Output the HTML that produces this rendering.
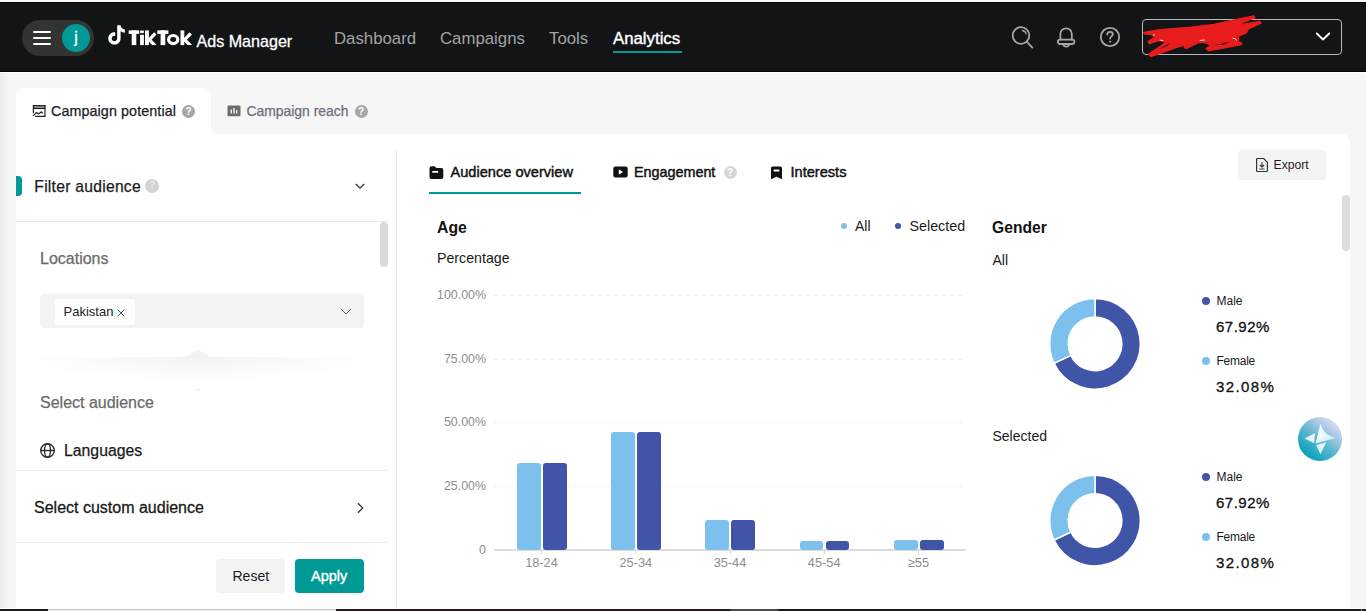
<!DOCTYPE html>
<html>
<head>
<meta charset="utf-8">
<title>TikTok Ads Manager</title>
<style>
*{box-sizing:border-box;margin:0;padding:0}
html,body{width:1366px;height:611px;overflow:hidden}
body{font-family:"Liberation Sans",sans-serif;background:#f6f6f6;position:relative;color:#121415}
.abs{position:absolute}
.t{position:absolute;white-space:nowrap;line-height:1}
/* header */
#topline{left:0;top:0;width:1366px;height:2px;background:#f8f8fd}
#hdr{left:0;top:2px;width:1366px;height:70px;background:#121415}
#hdrshadow{left:0;top:71px;width:1366px;height:1px;background:#020303}
#hdrwhite{left:0;top:72px;width:1366px;height:1px;background:#ffffff}
#leftshade{left:0;top:73px;width:9px;height:535px;background:linear-gradient(90deg,#ebebeb,#f6f6f6)}
#pill{left:22px;top:20px;width:72px;height:36px;border-radius:18px;background:#323434}
.hb{left:33px;width:18px;height:2px;background:#fff;border-radius:1px}
#avatar{left:62px;top:24px;width:28px;height:28px;border-radius:14px;background:#009995}
.nav{font-size:16.8px;color:#a3a4a6;top:31px}
/* panels */
#tab1{left:16px;top:88px;width:195px;height:50px;background:#fff;border-radius:8px 8px 0 0}
#panel{left:16px;top:134px;width:1334px;height:475px;background:#fff;border-radius:0 8px 0 0}
#notch{left:211px;top:126px;width:8px;height:8px;background:radial-gradient(circle at 100% 0,#f6f6f6 7.5px,#fff 8.5px)}
.hline{height:1px;background:#e9e9e9}
.help{border-radius:50%;color:#fff;text-align:center;font-weight:bold}
.btn{border-radius:4px;background:#f2f3f3}
.glabel{font-size:12.400px;color:#8d8d8d}
.bar{position:absolute;border-radius:3px}
.lb{background:#7cc0ee}.db{background:#4155a8}
.grid{position:absolute;left:494px;width:471px;height:1px;background:repeating-linear-gradient(90deg,#eeeeee 0,#eeeeee 4.200px,transparent 4.200px,transparent 8px)}
.itab{font-size:14.600px;color:#121212;-webkit-text-stroke:0.45px #121212}
.gv{font-size:15px;color:#111;-webkit-text-stroke:0.3px #111;letter-spacing:0.5px}
</style>
</head>
<body>
<!-- HEADER -->
<div class="abs" id="topline"></div>
<div class="abs" id="hdr"></div>
<div class="abs" id="hdrshadow"></div>
<div class="abs" style="left:0;top:2px;width:1366px;height:1px;background:#040405"></div>
<div class="abs" id="hdrwhite"></div>
<div class="abs" id="leftshade"></div>
<div class="abs" id="pill"></div>
<div class="abs hb" style="top:31px"></div>
<div class="abs hb" style="top:37px"></div>
<div class="abs hb" style="top:43px"></div>
<div class="abs" id="avatar"></div>
<div class="t" id="jj" style="left:74.200px;top:30px;font-size:16px;color:#fff;-webkit-text-stroke:0.3px #fff">j</div>
<!-- logo -->
<svg class="abs" style="left:107px;top:24px" width="20" height="22" viewBox="0 0 20 22"><path d="M10.2 1.2h3.4c.1 2.3 1.700 3.900 4.300 4.200v3.300c-1.600 0-3.100-.5-4.300-1.400v7.100c0 3.600-2.800 6.100-6.100 6.100-3.400 0-6.200-2.700-6.200-6.100 0-3.600 3.100-6.500 6.900-6v3.400c-1.900-.5-3.500.9-3.500 2.600 0 1.500 1.200 2.800 2.800 2.800 1.600 0 2.700-1.200 2.700-2.900z" fill="#fff"/></svg>
<svg class="abs" id="tiktok" style="left:0;top:0" width="200" height="60" viewBox="0 0 200 60"><defs><clipPath id="kc"><rect x="120" y="30.400" width="80" height="14.700"/></clipPath></defs><g fill="#fff" stroke="none"><rect x="128.700" y="30.400" width="10.500" height="3.500"/><rect x="131.700" y="30.400" width="4.600" height="14.700"/><rect x="140.100" y="30.500" width="3.800" height="2.800" rx=".8"/><rect x="140.100" y="34.800" width="3.800" height="10.300"/><rect x="145" y="30.400" width="3.900" height="14.700"/><rect x="157.300" y="30.400" width="11.100" height="3.500"/><rect x="160.600" y="30.400" width="4.700" height="14.700"/><rect x="180.500" y="30.400" width="3.800" height="14.700"/></g><g fill="none" stroke="#fff" stroke-width="3.300" clip-path="url(#kc)"><path d="M155.300 33.300L149.300 39.700L156.300 47"/><path d="M190.700 33.300L184.700 39.700L191.800 47"/></g><ellipse cx="173.200" cy="39.550" rx="4.600" ry="4.050" fill="none" stroke="#fff" stroke-width="3.200"/></svg>
<div class="t" id="adsm" style="left:196.500px;top:33px;font-size:16.100px;color:#fff;-webkit-text-stroke:0.3px #fff">Ads Manager</div>
<div class="t nav" id="n1" style="left:334px">Dashboard</div>
<div class="t nav" id="n2" style="left:440px">Campaigns</div>
<div class="t nav" id="n3" style="left:549px">Tools</div>
<div class="t nav" id="n4" style="left:613px;color:#fff;-webkit-text-stroke:0.4px #fff">Analytics</div>
<div class="abs" style="left:613px;top:51px;width:69px;height:2px;background:#009995"></div>
<!-- header icons -->
<svg class="abs" style="left:1008px;top:22px" width="30" height="30" viewBox="0 0 30 30" fill="none" stroke="#a6a7a8" stroke-width="1.800" stroke-linecap="round"><circle cx="13" cy="13.5" r="8.3"/><path d="M19 20l5.300 5.600"/><path d="M14.500 8.500c2 .3 3.200 1.600 3.600 3.400" stroke-width="1.300"/></svg>
<svg class="abs" style="left:1053px;top:24px" width="26" height="26" viewBox="0 0 26 26" fill="none" stroke="#a6a7a8" stroke-width="1.800" stroke-linejoin="round" stroke-linecap="round"><path d="M7.400 15.500V10a5.700 5.700 0 0 1 11.400 0V15.500"/><rect x="4.900" y="15.600" width="16.500" height="4.400" rx="2.200"/><path d="M10.500 21.300a2.800 1.700 0 0 0 5.400 0"/></svg>
<svg class="abs" style="left:1098px;top:25px" width="24" height="24" viewBox="0 0 24 24" fill="none" stroke="#a6a7a8" stroke-width="1.800" stroke-linecap="round"><circle cx="12" cy="12" r="9.200"/><path d="M9.300 9.600c0-1.700 1.200-2.700 2.800-2.700 1.500 0 2.700 1 2.700 2.400 0 2-2.700 2.100-2.700 4.200"/><circle cx="12.100" cy="16.700" r=".6" fill="#a6a7a8" stroke-width="1"/></svg>
<div class="abs" style="left:1142px;top:19px;width:200px;height:36px;border:1px solid #b9babb;border-radius:4px"></div>
<svg class="abs" style="left:1314px;top:30px" width="18" height="14" viewBox="0 0 18 14" fill="none" stroke="#fff" stroke-width="1.800" stroke-linecap="round" stroke-linejoin="round"><path d="M2.800 3.500l6.200 6 6.200-6"/></svg>
<svg class="abs" style="left:1136px;top:10px" width="136" height="54" viewBox="1136 10 136 54"><path d="M1143.7 32.4L1159.9 29.5L1191.3 27.1L1214.1 24.3L1233.2 20.0L1253.6 15.9L1255.1 17.6L1242.7 22.4L1237.0 25.2L1259.8 21.4L1261.2 23.3L1248.4 29.0L1246.5 32.8L1237.9 36.6L1238.9 40.0L1237.0 41.4L1241.7 42.8L1241.3 44.7L1208.4 50.9L1206.0 48.5L1210.3 45.7L1206.5 42.8L1198.9 42.4L1186.5 48.5L1184.2 47.6L1185.6 45.2L1178.9 46.6L1150.8 56.6L1148.5 54.3L1165.6 42.4L1159.9 40.5L1149.4 43.8L1148.0 41.4L1154.7 37.1L1153.2 34.9L1144.2 33.8z" fill="#e81c1c" stroke="#e81c1c" stroke-width="1.200" stroke-linejoin="round"/><path d="M1158.5 49.2L1169.9 43.3L1167.0 46.0zM1214.1 45.4L1229.8 41.7L1223.6 44.4z" fill="#121415"/><path d="M1153 35.500l1.500-.800M1160 40.200l3 .3M1200 40.500l4.500-.500M1233 38.200q3-.2 3.500 2" stroke="#f4e9e9" stroke-width="0.900" fill="none" stroke-linecap="round"/></svg>

<!-- TABS + PANEL -->
<div class="abs" id="tab1"></div>
<div class="abs" id="panel"></div>
<div class="abs" id="notch"></div>

<!-- outer tabs -->
<svg class="abs" style="left:32px;top:104px" width="14" height="14" viewBox="0 0 14 14" fill="none" stroke="#1e1e1e" stroke-width="1.200"><rect x="1.400" y="2.200" width="11.600" height="2" fill="#8f8f8f" stroke="none"/><path d="M3.200 12.300H13V1.700H1.400V9.200"/><path d="M1.400 4.500H13" stroke-width="1.100"/><path d="M1.100 11.900L4.500 8.500L6.600 10L9.400 7.800L10.800 9.400" stroke-width="1.200" stroke-linejoin="round"/></svg>
<div class="t" id="cp" style="left:51px;top:104px;letter-spacing:0.1px;font-size:14.3px;color:#1c1c28;-webkit-text-stroke:0.25px #1c1c28">Campaign potential</div>
<div class="abs help" style="left:182px;top:105px;width:13px;height:13px;background:#a6a6a6;font-size:10px;line-height:13px">?</div>
<svg class="abs" style="left:227px;top:105px" width="14" height="12" viewBox="0 0 14 12"><rect x=".5" y=".5" width="13" height="10.800" rx="1" fill="#6c6c6c"/><path d="M4.300 4.500v4M7 3v5.500M9.700 5.200v3.300" stroke="#fff" stroke-width="1.300"/></svg>
<div class="t" id="cr" style="left:246.500px;top:105px;font-size:13.9px;color:#6d6e7c;-webkit-text-stroke:0.25px #6d6e7c">Campaign reach</div>
<div class="abs help" style="left:354.500px;top:105px;width:13px;height:13px;background:#a6a6a6;font-size:10px;line-height:13px">?</div>

<!-- SIDEBAR -->
<div class="abs" style="left:16px;top:176px;width:6px;height:20px;background:#009995;border-radius:0 4px 4px 0"></div>
<div class="t" id="fa" style="left:34.300px;top:179px;font-size:15.700px;letter-spacing:0.250px;color:#1a1a1a;-webkit-text-stroke:0.25px #1a1a1a">Filter audience</div>
<div class="abs help" style="left:145px;top:179px;width:14px;height:14px;background:#d3d3d3;font-size:10px;line-height:14px;font-weight:normal;color:#f1f1f1">?</div>
<svg class="abs" style="left:354px;top:181px" width="12" height="10" viewBox="0 0 12 10" fill="none" stroke="#333" stroke-width="1.300"><path d="M1.800 3l4.200 4.200 4.200-4.200"/></svg>
<div class="abs hline" style="left:16px;top:221px;width:372px"></div>
<div class="abs" style="left:380px;top:222px;width:8px;height:45px;background:#dbdbdb;border-radius:4px"></div>
<div class="t" id="loc" style="left:40px;top:251px;font-size:16px;color:#6a6a6a;-webkit-text-stroke:0.25px #6a6a6a">Locations</div>
<div class="abs" style="left:40px;top:294px;width:324px;height:34px;background:#f2f3f3;border-radius:4px"></div>
<div class="abs" style="left:55px;top:299px;width:80px;height:26px;background:#fff;border-radius:4px"></div>
<div class="t" id="pak" style="left:63.500px;top:305px;font-size:13px;color:#222">Pakistan</div>
<svg class="abs" style="left:115.500px;top:307.500px" width="10" height="10" viewBox="0 0 10 10" stroke="#555" stroke-width="1" fill="none"><path d="M1.700 1.700l6.600 6.600M8.300 1.700l-6.600 6.600"/></svg>
<svg class="abs" style="left:339px;top:306px" width="14" height="11" viewBox="0 0 14 11" fill="none" stroke="#6e6e6e" stroke-width="1"><path d="M2 3l5 5 5-5"/></svg>
<!-- faint popover shadow -->
<div class="abs" style="left:18px;top:357px;width:360px;height:28px;background:radial-gradient(ellipse 180px 25px at 50% 0,#f3f3f3 0,#f7f7f7 35%,#fcfcfc 70%,#fff 100%)"></div>
<svg class="abs" style="left:184px;top:349px" width="28" height="10" viewBox="0 0 28 10"><path d="M0 9.500L12 1.500q2-1.200 4 0L28 9.500z" fill="#f2f2f2"/></svg>
<div class="abs" style="left:195px;top:389px;width:6px;height:1px;background:#efefef;border-radius:1px"></div>
<div class="t" id="sa" style="left:40px;top:395px;font-size:16px;color:#6a6a6a;-webkit-text-stroke:0.25px #6a6a6a">Select audience</div>
<svg class="abs" style="left:39.300px;top:442px" width="17" height="17" viewBox="0 0 17 17" fill="none" stroke="#2c2c2c" stroke-width="1.400"><circle cx="8.500" cy="8.500" r="6.800"/><ellipse cx="8.500" cy="8.500" rx="3" ry="6.800"/><path d="M1.700 8.500h13.600"/></svg>
<div class="t" id="lang" style="left:64px;top:442.500px;font-size:15.800px;color:#1a1a1a;-webkit-text-stroke:0.25px #1a1a1a">Languages</div>
<div class="abs hline" style="left:16px;top:470px;width:372px"></div>
<div class="t" id="sca" style="left:34px;top:500px;font-size:16px;color:#1a1a1a;-webkit-text-stroke:0.3px #1a1a1a">Select custom audience</div>
<svg class="abs" style="left:354px;top:501px" width="12" height="14" viewBox="0 0 12 14" fill="none" stroke="#333" stroke-width="1.300"><path d="M4 2.300l4.700 4.700-4.700 4.700"/></svg>
<div class="abs hline" style="left:16px;top:542px;width:372px"></div>
<div class="abs btn" style="left:216px;top:559px;width:69px;height:34px"></div>
<div class="t" id="reset" style="left:232.500px;top:569px;font-size:14px;color:#1a1a1a">Reset</div>
<div class="abs btn" style="left:295px;top:559px;width:69px;height:34px;background:#009995"></div>
<div class="t" id="apply" style="left:311px;top:569px;font-size:14.500px;color:#fff;-webkit-text-stroke:0.4px #fff">Apply</div>
<div class="abs" style="left:396px;top:150px;width:1px;height:459px;background:#e9e9e9"></div>

<!-- MAIN -->
<svg class="abs" style="left:429px;top:165px" width="15" height="15" viewBox="0 0 15 15"><path d="M.5 3.200q0-2 2-2h3.200l1.600 1.700h5q2 0 2 2v7q0 2-2 2h-9.800q-2 0-2-2z" fill="#111"/><rect x="3.200" y="6" width="6" height="1.800" rx=".5" fill="#fff"/></svg>
<div class="t itab" id="ao" style="left:450.500px;top:165px">Audience overview</div>
<div class="abs" style="left:429px;top:192px;width:152px;height:2px;background:#009995"></div>
<svg class="abs" style="left:613px;top:166px" width="15" height="12" viewBox="0 0 15 12"><rect x=".3" y=".5" width="14.400" height="11" rx="2" fill="#111"/><path d="M5.800 3.300v5.400l4.200-2.700z" fill="#fff"/></svg>
<div class="t itab" id="eng" style="left:634px;top:165px;font-size:14.350px">Engagement</div>
<div class="abs help" style="left:723.500px;top:165.500px;width:13px;height:13px;background:#d6d6d6;font-size:10px;line-height:13px">?</div>
<svg class="abs" style="left:770px;top:166px" width="13" height="14" viewBox="0 0 13 14"><path d="M1 2q0-1.600 1.600-1.600h7.800q1.600 0 1.600 1.600v11.300l-5.500-2.600-5.500 2.600z" fill="#111"/><rect x="3.600" y="3.600" width="5.800" height="1.800" rx=".5" fill="#fff"/></svg>
<div class="t itab" id="int" style="left:790.500px;top:165px">Interests</div>

<div class="t" id="age" style="left:437px;top:220px;font-size:15.800px;font-weight:bold;color:#121212">Age</div>
<div class="t" id="pct" style="left:437px;top:251px;font-size:14.200px;color:#1a1a1a">Percentage</div>
<div class="abs" style="left:841px;top:223px;width:6px;height:6px;border-radius:3px;background:#7cc0ee"></div>
<div class="t" id="lall" style="left:855px;top:219px;font-size:14px;color:#1a1a1a">All</div>
<div class="abs" style="left:895px;top:223px;width:6px;height:6px;border-radius:3px;background:#4155a8"></div>
<div class="t" id="lsel" style="left:909.500px;top:219px;font-size:14.300px;color:#1a1a1a">Selected</div>
<div class="grid" style="top:295px"></div><div class="t glabel yl" style="left:386px;width:100px;text-align:right;top:288.8px">100.00%</div>
<div class="grid" style="top:359px"></div><div class="t glabel yl" style="left:386px;width:100px;text-align:right;top:352.5px">75.00%</div>
<div class="grid" style="top:422px"></div><div class="t glabel yl" style="left:386px;width:100px;text-align:right;top:416.2px">50.00%</div>
<div class="grid" style="top:486px"></div><div class="t glabel yl" style="left:386px;width:100px;text-align:right;top:479.9px">25.00%</div>
<div class="t glabel yl" style="left:386px;width:100px;text-align:right;top:543.5px">0</div>

<div class="abs" style="left:494px;top:549px;width:472px;height:2px;background:#dcdcdc"></div>
<div class="abs" style="left:541.0px;top:551px;width:1px;height:3px;background:#d8d8d8"></div><div class="t glabel xl" style="left:511.5px;width:60px;text-align:center;top:557px;font-size:12.800px">18-24</div>
<div class="abs" style="left:635.3px;top:551px;width:1px;height:3px;background:#d8d8d8"></div><div class="t glabel xl" style="left:605.8px;width:60px;text-align:center;top:557px;font-size:12.800px">25-34</div>
<div class="abs" style="left:729.5px;top:551px;width:1px;height:3px;background:#d8d8d8"></div><div class="t glabel xl" style="left:700.0px;width:60px;text-align:center;top:557px;font-size:12.800px">35-44</div>
<div class="abs" style="left:823.7px;top:551px;width:1px;height:3px;background:#d8d8d8"></div><div class="t glabel xl" style="left:794.2px;width:60px;text-align:center;top:557px;font-size:12.800px">45-54</div>
<div class="abs" style="left:917.9px;top:551px;width:1px;height:3px;background:#d8d8d8"></div><div class="t glabel xl" style="left:888.4px;width:60px;text-align:center;top:557px;font-size:12.800px">≥55</div>

<div class="bar lb" style="left:516.9px;top:462.7px;width:23.800px;height:87.5px"></div><div class="bar db" style="left:542.8px;top:462.7px;width:23.800px;height:87.5px"></div>
<div class="bar lb" style="left:611.1px;top:432.0px;width:23.800px;height:118.2px"></div><div class="bar db" style="left:637.0px;top:432.0px;width:23.800px;height:118.2px"></div>
<div class="bar lb" style="left:705.4px;top:519.8px;width:23.800px;height:30.4px"></div><div class="bar db" style="left:731.3px;top:519.8px;width:23.800px;height:30.4px"></div>
<div class="bar lb" style="left:799.6px;top:540.6px;width:23.800px;height:9.6px"></div><div class="bar db" style="left:825.5px;top:540.6px;width:23.800px;height:9.6px"></div>
<div class="bar lb" style="left:893.9px;top:539.6px;width:23.800px;height:10.6px"></div><div class="bar db" style="left:919.8px;top:539.6px;width:23.800px;height:10.6px"></div>
<!-- Gender -->
<div class="t" id="gen" style="left:992px;top:220px;font-size:15.700px;font-weight:bold;color:#121212">Gender</div>
<div class="t" id="gall" style="left:992.500px;top:253px;font-size:14px;color:#1a1a1a">All</div>
<div class="t" id="gsel" style="left:992.500px;top:429px;font-size:14px;color:#1a1a1a">Selected</div>
<svg class="abs" style="left:0;top:0" width="1366" height="611" viewBox="0 0 1366 611"><path d="M1095.00 298.50A45.3 45.3 0 1 1 1054.11 363.29L1070.81 355.33A26.8 26.8 0 1 0 1095.00 317.00Z" fill="#4155a8" stroke="#fff" stroke-width="1.500"/><path d="M1054.11 363.29A45.3 45.3 0 0 1 1095.00 298.50L1095.00 317.00A26.8 26.8 0 0 0 1070.81 355.33Z" fill="#7cc0ee" stroke="#fff" stroke-width="1.500"/><path d="M1095.00 475.20A45.3 45.3 0 1 1 1054.11 539.99L1070.81 532.03A26.8 26.8 0 1 0 1095.00 493.70Z" fill="#4155a8" stroke="#fff" stroke-width="1.500"/><path d="M1054.11 539.99A45.3 45.3 0 0 1 1095.00 475.20L1095.00 493.70A26.8 26.8 0 0 0 1070.81 532.03Z" fill="#7cc0ee" stroke="#fff" stroke-width="1.500"/></svg>
<div class="abs" style="left:1202px;top:297px;width:8px;height:8px;border-radius:4px;background:#4155a8"></div><div class="t gl" style="left:1216.500px;top:295px;font-size:12px;color:#1a1a1a">Male</div><div class="t gv" style="left:1216px;top:319px">67.92%</div><div class="abs" style="left:1202px;top:357px;width:8px;height:8px;border-radius:4px;background:#7cc0ee"></div><div class="t gl" style="left:1216.500px;top:355px;font-size:12px;letter-spacing:-0.25px;color:#1a1a1a">Female</div><div class="t gv" style="left:1216px;top:379px;letter-spacing:1.400px">32.08%</div>
<div class="abs" style="left:1202px;top:473px;width:8px;height:8px;border-radius:4px;background:#4155a8"></div><div class="t gl" style="left:1216.500px;top:471px;font-size:12px;color:#1a1a1a">Male</div><div class="t gv" style="left:1216px;top:495px">67.92%</div><div class="abs" style="left:1202px;top:533px;width:8px;height:8px;border-radius:4px;background:#7cc0ee"></div><div class="t gl" style="left:1216.500px;top:531px;font-size:12px;letter-spacing:-0.25px;color:#1a1a1a">Female</div><div class="t gv" style="left:1216px;top:555px;letter-spacing:1.400px">32.08%</div>

<!-- export -->
<div class="abs btn" style="left:1238px;top:150px;width:88px;height:30px"></div>
<svg class="abs" style="left:1255px;top:157px" width="14" height="16" viewBox="0 0 14 16" fill="none" stroke="#333" stroke-width="1.200" stroke-linejoin="round"><path d="M1.600 2.500q0-1 1-1h6l3.800 3.800v8.200q0 1-1 1h-8.800q-1 0-1-1z"/><path d="M7 5v5M4.800 8l2.200 2.200 2.200-2.200M4.500 12h5" stroke-width="1.100"/></svg>
<div class="t" id="exp" style="left:1273.500px;top:158.500px;font-size:12.200px;color:#2a1d1d">Export</div>
<div class="abs" style="left:1342px;top:195px;width:8px;height:56px;background:#dcdcdc;border-radius:4px"></div>
<!-- floating button -->
<div class="abs" style="left:1298px;top:417px;width:44px;height:44px;border-radius:22px;background:linear-gradient(218deg,#ecdffc 6%,#b9cdea 26%,#62b7d1 52%,#16a6be 78%,#0aa0b6 100%)"></div>
<svg class="abs" style="left:1298px;top:417px" width="44" height="44" viewBox="0 0 44 44"><defs><linearGradient id="sg" x1="0" y1="0" x2="1" y2="1"><stop offset="0" stop-color="#ffffff"/><stop offset="1" stop-color="#c9eef5"/></linearGradient></defs><path d="M22.600 6.800c1.500 6.500 5.500 11.200 14.700 14.300l-19.600 5.300z" fill="url(#sg)"/><path d="M6.500 21.500l10.600-5.500-1 10z" fill="#e4f7fb"/><path d="M18.300 28l10-2.800-5.900 12z" fill="#dff5fa"/><path d="M22.600 6.800l-4.900 19.600 6.200-5.800z" fill="#fff" opacity=".6"/></svg>
<!-- bottom bar -->
<div class="abs" style="left:0;top:608px;width:1366px;height:1px;background:#fdfdfd"></div>
<div class="abs" style="left:0;top:609px;width:1366px;height:2px;background:#1c1a1a"></div>
<div class="abs" style="left:336px;top:609px;width:394px;height:2px;background:#231b19"></div>
<div class="abs" style="left:48px;top:609px;width:288px;height:2px;background:linear-gradient(180deg,#c2c2c2 0,#c2c2c2 50%,#ededed 50%)"></div>
<div class="abs" style="left:730px;top:609px;width:48px;height:2px;background:#4b4b4b"></div>
<div class="abs" style="left:1361px;top:609px;width:1px;height:2px;background:#8a8a8a"></div>
</body>
</html>
